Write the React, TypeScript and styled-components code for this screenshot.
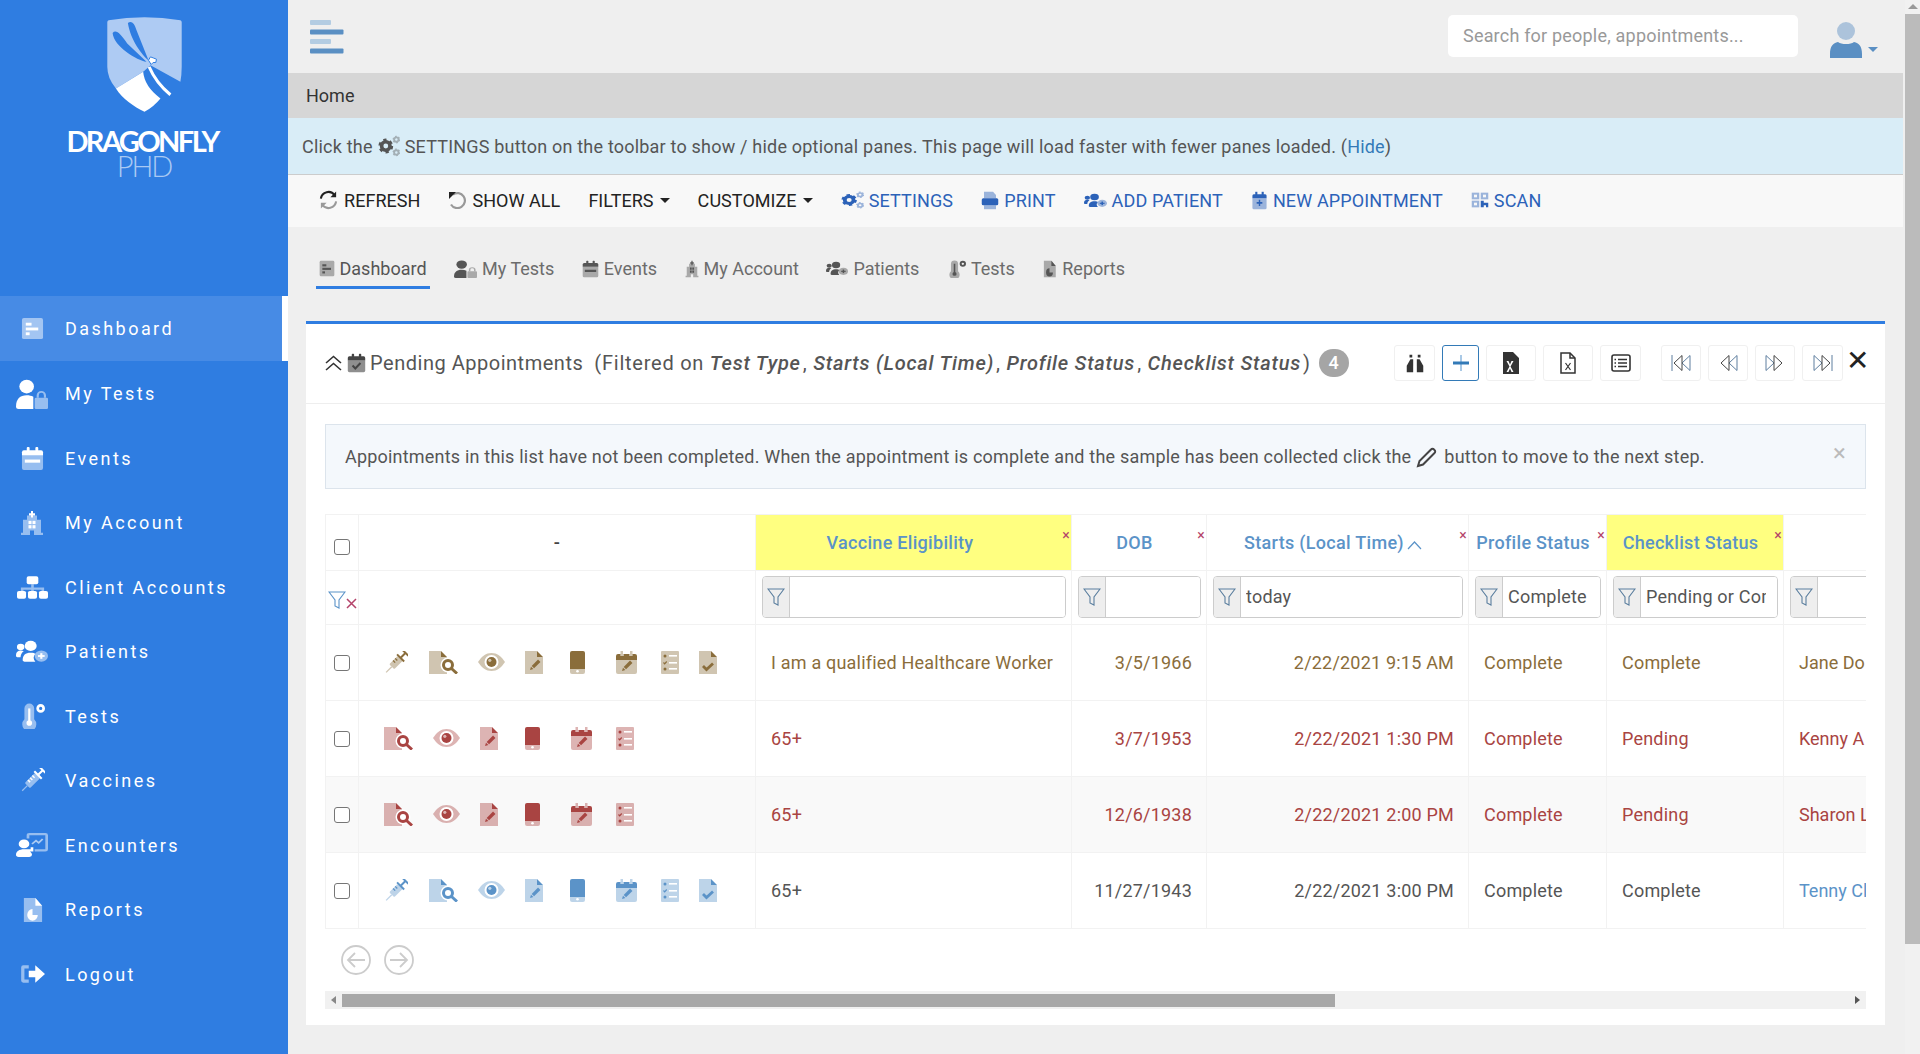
import React from 'react';
import styled, { createGlobalStyle } from 'styled-components';

const GlobalStyle = createGlobalStyle`
  html, body {
    margin: 0;
    height: 100%;
    overflow: hidden;
    background: #efefef;
    font-family: Roboto, "Liberation Sans", sans-serif;
    font-size: 18px;
    color: #555;
  }
  * {
    box-sizing: border-box;
  }
`;

type IconDef = { s?: React.ReactNode; p?: React.ReactNode };

const gear = (cx: number, cy: number, r: number) => (
  <g>
    <circle cx={cx} cy={cy} r={r} fill="none" stroke="currentColor" strokeWidth={r * 0.85} />
    <circle
      cx={cx}
      cy={cy}
      r={r * 1.45}
      fill="none"
      stroke="currentColor"
      strokeWidth={r * 0.6}
      strokeDasharray={`${r * 0.75} ${r * 0.77}`}
    />
  </g>
);

const ICONS: Record<string, IconDef> = {
  dashboard: {
    s: <rect x="1" y="1" width="22" height="22" rx="2" />,
    p: (
      <>
        <rect x="5" y="6" width="6" height="3" />
        <rect x="5" y="11" width="13" height="3" />
        <rect x="5" y="16" width="4" height="3" />
      </>
    ),
  },
  userLock: {
    s: (
      <>
        <rect x="14" y="15" width="10" height="9" rx="1" />
        <path d="M15.500 15v-2a3.500 3.500 0 0 1 7 0v2h-1.600v-2a1.900 1.900 0 0 0-3.800 0v2z" />
      </>
    ),
    p: (
      <>
        <circle cx="8" cy="6" r="5.500" />
        <path d="M0 22c0-6 3-9 8-9 2 0 3.600.4 5 1.200V24H2a2 2 0 0 1-2-2z" />
      </>
    ),
  },
  calendar: {
    s: <path d="M1 9h22v12a2 2 0 0 1-2 2H3a2 2 0 0 1-2-2z" />,
    p: (
      <>
        <path d="M1 6a2 2 0 0 1 2-2h18a2 2 0 0 1 2 2v3H1z" />
        <rect x="6" y="1" width="3" height="4" rx="1" />
        <rect x="15" y="1" width="3" height="4" rx="1" />
        <rect x="4" y="13" width="16" height="3" />
      </>
    ),
  },
  calendarCheck: {
    s: <path d="M1 9h22v12a2 2 0 0 1-2 2H3a2 2 0 0 1-2-2z" />,
    p: (
      <>
        <path d="M1 6a2 2 0 0 1 2-2h18a2 2 0 0 1 2 2v3H1z" />
        <rect x="6" y="1" width="3" height="4" rx="1" />
        <rect x="15" y="1" width="3" height="4" rx="1" />
        <path d="M7 15l3.500 3.500L17 12" fill="none" stroke="currentColor" strokeWidth="2.600" />
      </>
    ),
  },
  hospital: {
    s: <path d="M3 9h4V5h10v4h4v12h2v2h-9v-4h-4v4H1v-2h2z" />,
    p: (
      <>
        <path d="M11 1h2v2h2v2h-2v2h-2V5H9V3h2z" />
        <rect x="8.500" y="10" width="3" height="3" />
        <rect x="12.500" y="10" width="3" height="3" />
        <rect x="8.500" y="14" width="3" height="3" />
        <rect x="12.500" y="14" width="3" height="3" />
      </>
    ),
  },
  sitemap: {
    s: <path d="M11 9h2v3h8v4h-2v-2h-6v2h-2v-2H5v2H3v-4h8z" />,
    p: (
      <>
        <rect x="7.500" y="2" width="9" height="7" rx="1.500" />
        <rect x="0" y="15" width="7" height="7" rx="1.500" />
        <rect x="8.500" y="15" width="7" height="7" rx="1.500" />
        <rect x="17" y="15" width="7" height="7" rx="1.500" />
      </>
    ),
  },
  usersMedical: {
    s: <circle cx="19" cy="16" r="5" />,
    p: (
      <>
        <circle cx="11" cy="7" r="4.500" />
        <path d="M5 20c0-5 2-7 6-7 2 0 3 .5 3.500 1a6 6 0 0 0 0 7H6.500A1.500 1.500 0 0 1 5 20z" />
        <circle cx="3.500" cy="8" r="2.800" />
        <path d="M0 15c0-2.500 1.500-4 3.500-4 1 0 1.800.3 2.300.8C4.300 13 3.600 14.600 3.400 17H1a1 1 0 0 1-1-1z" />
        <rect x="18.200" y="13.500" width="1.600" height="5" />
        <rect x="16.500" y="15.200" width="5" height="1.600" />
      </>
    ),
  },
  thermometer: {
    s: <path d="M5 5a4.500 4.500 0 0 1 9 0v10a6.500 6.500 0 1 1-9 0z" />,
    p: (
      <>
        <rect x="8.500" y="5" width="2" height="12" />
        <circle cx="9.500" cy="18.500" r="2.600" />
        <path
          fillRule="evenodd"
          d="M20 1a4 4 0 1 1 0 8 4 4 0 0 1 0-8zm0 2.500a1.500 1.500 0 1 0 0 3 1.500 1.500 0 0 0 0-3z"
        />
      </>
    ),
  },
  syringe: {
    s: (
      <g transform="rotate(45 12 12)">
        <rect x="8.500" y="5" width="7" height="14" rx="1" />
        <rect x="11.400" y="19" width="1.200" height="7" />
      </g>
    ),
    p: (
      <g transform="rotate(45 12 12)">
        <rect x="7" y="3.500" width="10" height="2" />
        <rect x="11" y="-2" width="2" height="6" />
        <rect x="8" y="-3" width="8" height="2" />
        <rect x="8.500" y="8" width="3" height="1.400" />
        <rect x="8.500" y="11" width="3" height="1.400" />
        <rect x="8.500" y="14" width="3" height="1.400" />
      </g>
    ),
  },
  chalkboard: {
    s: (
      <path
        fillRule="evenodd"
        d="M8 3a2 2 0 0 1 2-2h12a2 2 0 0 1 2 2v13a2 2 0 0 1-2 2h-8v-2h8V3H10v3H8z"
      />
    ),
    p: (
      <>
        <circle cx="6" cy="11" r="4" />
        <path d="M0 21c0-3 2.500-5 6-5h5v-2h2v4H10.500c.800.800 1.500 1.800 1.500 3a2 2 0 0 1-2 2H2a2 2 0 0 1-2-2z" />
        <path d="M12 11l3-3 2 2 3-3.500" fill="none" stroke="currentColor" strokeWidth="1.400" opacity="0.6" />
      </>
    ),
  },
  filePie: {
    s: <path d="M3 1h12l7 7v15H3z" />,
    p: (
      <>
        <path d="M15 1l7 7h-7z" />
        <path d="M12 11a5.500 5.500 0 1 0 5.500 5.500H12z" />
      </>
    ),
  },
  signOut: {
    s: <path d="M9 4H4a2 2 0 0 0-2 2v12a2 2 0 0 0 2 2h5v-3H5V7h4z" />,
    p: <path d="M9 9h6V4l9 8-9 8v-5H9z" />,
  },
  gears: {
    s: (
      <>
        {gear(20, 5, 2.400)}
        {gear(20, 19, 2.400)}
      </>
    ),
    p: gear(8.500, 12, 4.600),
  },
  print: {
    s: (
      <>
        <path d="M4 1h12l4 4v4H4z" />
        <rect x="4" y="18" width="16" height="5" />
      </>
    ),
    p: <rect x="1" y="9" width="22" height="9" rx="2" />,
  },
  calendarPlus: {
    s: <path d="M2 9h20v12a2 2 0 0 1-2 2H4a2 2 0 0 1-2-2z" />,
    p: (
      <>
        <path d="M2 6a2 2 0 0 1 2-2h16a2 2 0 0 1 2 2v3H2z" />
        <rect x="6" y="1" width="3" height="4" />
        <rect x="15" y="1" width="3" height="4" />
        <path d="M11 11h2v3h3v2h-3v3h-2v-3H8v-2h3z" />
      </>
    ),
  },
  qr: {
    s: (
      <>
        <rect x="1" y="1" width="10" height="10" />
        <rect x="13" y="1" width="10" height="10" />
        <rect x="1" y="13" width="10" height="10" />
      </>
    ),
    p: (
      <>
        <rect x="4" y="4" width="4" height="4" fill="#f8f8f8" />
        <rect x="16" y="4" width="4" height="4" fill="#f8f8f8" />
        <rect x="4" y="16" width="4" height="4" fill="#f8f8f8" />
        <path d="M13 13h4v3h6v7h-3v-3h-3v3h-4z" />
      </>
    ),
  },
  binoculars: {
    p: (
      <>
        <path d="M7 8h3v14H3v-7z" />
        <path d="M14 8h3l4 7v7h-7z" />
        <rect x="6" y="3" width="3" height="3" />
        <rect x="15" y="3" width="3" height="3" />
      </>
    ),
  },
  fileX: {
    p: (
      <path
        fillRule="evenodd"
        d="M4 1h10l6 6v16H4zm3.500 9l3 5.500-3 5.500h2l1.500-3.500 1.500 3.500h2l-3-5.500 3-5.500h-2L11 13.500 9.500 10z"
      />
    ),
  },
};

const Duo = ({ name, w, h, sec = 0.45 }: { name: string; w: number; h?: number; sec?: number }) => (
  <svg width={w} height={h ?? w} viewBox="0 0 24 24" fill="currentColor" preserveAspectRatio="none">
    <g opacity={sec}>{ICONS[name].s}</g>
    {ICONS[name].p}
  </svg>
);

const pen = (x: number, y: number) => (
  <g transform={`translate(${x} ${y}) rotate(45)`}>
    <rect x="-1.700" y="-6" width="3.400" height="9" />
    <path d="M-1.700 4L0 7l1.700-3z" />
  </g>
);

const ROW_ICONS: Record<string, { w: number; gap: number; body: React.ReactNode }> = {
  syringe: {
    w: 24,
    gap: 21,
    body: (
      <g transform="translate(0 -.5)">
        <g opacity={0.4}>
          <g transform="rotate(45 12 12)">
            <rect x="8.500" y="6" width="7" height="12" rx="1" />
            <rect x="11.400" y="18" width="1.200" height="8" />
          </g>
        </g>
        <g transform="rotate(45 12 12)">
          <rect x="7" y="4.500" width="10" height="2" />
          <rect x="11" y="-1" width="2" height="6" />
          <rect x="8" y="-2.500" width="8" height="2" />
          <rect x="8.500" y="9" width="3" height="1.300" />
          <rect x="8.500" y="12" width="3" height="1.300" />
        </g>
      </g>
    ),
  },
  fileSearch: {
    w: 29,
    gap: 20,
    body: (
      <>
        <path d="M0 0h12v6h6v17H0z" opacity={0.4} />
        <path d="M12 0l6 6h-6z" />
        <circle cx="19" cy="14" r="7.500" fill="#fff" />
        <circle cx="19" cy="14" r="4.500" fill="#fff" stroke="currentColor" strokeWidth="3" />
        <path d="M22.500 17.500l5.500 5" stroke="currentColor" strokeWidth="3" />
      </>
    ),
  },
  eye: {
    w: 27,
    gap: 20,
    body: (
      <>
        <path d="M0 11C4 5 8 2 13.500 2S23 5 27 11c-4 6-8 9-13.500 9S4 17 0 11z" opacity={0.4} />
        <circle cx="13.500" cy="11" r="7" fill="#fff" />
        <circle cx="13.500" cy="11" r="5" />
        <circle cx="11.800" cy="9.300" r="1.600" fill="#fff" opacity="0.6" />
      </>
    ),
  },
  filePen: {
    w: 18,
    gap: 27,
    body: (
      <>
        <path d="M0 0h12v6h6v17H0z" opacity={0.4} />
        <path d="M12 0l6 6h-6z" />
        {pen(10, 14)}
      </>
    ),
  },
  phone: {
    w: 15,
    gap: 31,
    body: (
      <>
        <path d="M2 0h11a2 2 0 0 1 2 2v16H0V2a2 2 0 0 1 2-2z" />
        <path d="M0 17h15v4a2 2 0 0 1-2 2H2a2 2 0 0 1-2-2z" opacity={0.4} />
        <circle cx="7.500" cy="20.300" r="1.300" fill="#fff" />
      </>
    ),
  },
  calPen: {
    w: 21,
    gap: 24,
    body: (
      <>
        <path d="M0 7h21v14a2 2 0 0 1-2 2H2a2 2 0 0 1-2-2z" opacity={0.4} />
        <rect x="4.500" y="0" width="2.500" height="5" opacity={0.4} />
        <rect x="14" y="0" width="2.500" height="5" opacity={0.4} />
        <path d="M2 3h2.500v2h3V3h6v2h3V3H19a2 2 0 0 1 2 2v4H0V5a2 2 0 0 1 2-2z" />
        {pen(11, 15)}
      </>
    ),
  },
  checklist: {
    w: 18,
    gap: 20,
    body: (
      <>
        <rect x="0" y="0" width="18" height="23" rx="1" opacity={0.4} />
        <circle cx="4" cy="5" r="1.500" />
        <path d="M2.500 11.500l1.200 1.300 2-2.300" fill="none" stroke="currentColor" strokeWidth="1.200" />
        <circle cx="4" cy="18" r="1.500" />
        <rect x="8" y="4" width="8" height="1.600" fill="#fff" />
        <rect x="8" y="11" width="8" height="1.600" fill="#fff" />
        <rect x="8" y="17" width="8" height="1.600" fill="#fff" />
      </>
    ),
  },
  fileCheck: {
    w: 18,
    gap: 0,
    body: (
      <>
        <path d="M0 0h12v6h6v17H0z" opacity={0.4} />
        <path d="M12 0l6 6h-6z" />
        <path d="M4 15l3.500 3.500L14 12.500" fill="none" stroke="currentColor" strokeWidth="2.800" />
      </>
    ),
  },
};

const Shell = styled.div`
  display: flex;
  height: 1054px;
  overflow: hidden;
`;

const Sidebar = styled.aside`
  flex: 0 0 288px;
  background: #2f7de1;
  display: flex;
  flex-direction: column;
`;

const LogoBox = styled.div`
  height: 296px;
  display: flex;
  flex-direction: column;
  align-items: center;
  padding-top: 17px;
`;

const LogoName = styled.div`
  margin: 15px 0 0 -4px;
  font-family: Lato, Roboto, sans-serif;
  font-size: 29px;
  line-height: 22px;
  font-weight: 700;
  letter-spacing: -2.600px;
  color: #fff;
`;

const LogoPhd = styled.div`
  margin-top: 3px;
  font-family: Lato, Roboto, sans-serif;
  font-size: 29px;
  line-height: 22px;
  font-weight: 300;
  letter-spacing: -2px;
  color: #a9c9f3;
`;

const NavItem = styled.div<{ $active?: boolean }>`
  height: 64.500px;
  display: flex;
  align-items: center;
  gap: 17px;
  padding: ${(p) => (p.$active ? 0 : 2)}px 0 0 16px;
  color: #fff;
  letter-spacing: 2.450px;
  font-size: 18px;
  background: ${(p) => (p.$active ? '#478be5' : 'transparent')};
  border-right: 6px solid ${(p) => (p.$active ? '#fff' : 'transparent')};
`;

const NavIconBox = styled.span`
  width: 32px;
  display: flex;
  justify-content: center;
`;

const Main = styled.main`
  flex: 1;
  min-width: 0;
  display: flex;
  flex-direction: column;
`;

const TopBar = styled.header`
  height: 73px;
  display: flex;
  align-items: center;
  padding: 0 27px 0 22px;
`;

const Spacer = styled.div`
  flex: 1;
`;

const SearchInput = styled.input`
  width: 350px;
  height: 42px;
  margin-top: -2px;
  border: 0;
  border-radius: 5px;
  background: #fff;
  padding: 0 15px;
  font: 18px Roboto, sans-serif;
  letter-spacing: 0.2px;
  outline: none;
  &::placeholder {
    color: #999;
    opacity: 1;
  }
`;

const AvatarBox = styled.div`
  display: flex;
  align-items: flex-end;
  margin: 6px 0 0 32px;
  color: #5a8fc3;
`;

const Caret = styled.span`
  display: inline-block;
  border-top: 5px solid currentColor;
  border-left: 5px solid transparent;
  border-right: 5px solid transparent;
`;

const AvatarCaret = styled(Caret)`
  margin: 0 0 6px 6px;
`;

const Breadcrumb = styled.div`
  height: 45px;
  margin-right: 2px;
  background: #d6d6d6;
  padding-left: 18px;
  display: flex;
  align-items: center;
  color: #333;
`;

const Alert = styled.div`
  height: 56px;
  margin-right: 2px;
  background: #d9edf7;
  padding-left: 14px;
  display: flex;
  align-items: center;
  gap: 5px;
  letter-spacing: 0.2px;
  white-space: pre;
`;

const HideLink = styled.a`
  color: #337ab7;
`;

const Toolbar = styled.nav`
  height: 53px;
  margin-right: 2px;
  border-top: 1px solid #ccc;
  background: #f8f8f8;
  padding: 0 0 2px 31px;
  display: flex;
  align-items: center;
  gap: 28px;
  letter-spacing: 0.05px;
`;

const ToolButton = styled.div<{ $blue?: boolean }>`
  display: flex;
  align-items: center;
  gap: ${(p) => (p.$blue ? 5 : 6)}px;
  color: ${(p) => (p.$blue ? '#2c62b8' : '#222')};
  letter-spacing: ${(p) => (p.$blue ? 0.14 : 0.05)}px;
`;

const Tabs = styled.div`
  height: 94px;
  display: flex;
  align-items: flex-start;
  gap: 21.500px;
  padding: 26px 0 0 27.500px;
`;

const Tab = styled.div<{ $active?: boolean }>`
  height: 36px;
  display: flex;
  align-items: center;
  gap: 5px;
  padding: 0 3px 2px;
  color: ${(p) => (p.$active ? '#555' : '#6c6c6c')};
  border-bottom: 3px solid ${(p) => (p.$active ? '#2f7de1' : 'transparent')};
`;

const TabIcon = styled.span`
  color: #555;
  display: flex;
`;

const Card = styled.section`
  margin: 0 20px 0 18px;
  height: 704px;
  background: #fff;
  border-top: 3px solid #2f7de1;
  padding: 0 19px;
`;

const CardHead = styled.div`
  height: 80px;
  margin: 0 -19px;
  padding: 0 19px 2px;
  display: flex;
  align-items: center;
  border-bottom: 1px solid #eee;
`;

const TitleIcons = styled.span`
  display: flex;
  align-items: center;
  gap: 5px;
  margin-right: 4px;
  color: #444;
`;

const Title = styled.span`
  font-size: 20px;
  letter-spacing: 0.52px;
  color: #555;
`;

const Filtered = styled(Title)`
  margin-left: 11px;
  letter-spacing: 0.76px;
  & > em {
    font-weight: 500;
    padding-right: 2px;
  }
`;

const Badge = styled.span`
  margin-left: 8px;
  width: 30px;
  height: 28px;
  border-radius: 14px;
  background: #a5a5a5;
  color: #fff;
  display: flex;
  align-items: center;
  justify-content: center;
  font-weight: 500;
`;

const CardTools = styled.div`
  margin-left: auto;
  display: flex;
  align-items: center;
  gap: 7px;
`;

const ToolGap = styled.span`
  width: 6px;
`;

const IconBtn = styled.button<{ $w: number; $on?: boolean }>`
  width: ${(p) => p.$w}px;
  height: 36px;
  padding: 0;
  background: #fff;
  border: 1px solid ${(p) => (p.$on ? '#337ab7' : '#f0f0f0')};
  border-radius: 3px;
  display: flex;
  align-items: center;
  justify-content: center;
  color: #333;
`;

const CloseX = styled.span`
  margin: -4px 0 0 -2px;
  width: 18px;
  font-size: 28px;
  line-height: 1;
  font-weight: 300;
  color: #222;
  display: flex;
  justify-content: center;
`;

const InfoBox = styled.div`
  position: relative;
  margin-top: 20px;
  height: 65px;
  background: #f4f8fc;
  border: 1px solid #dce4ec;
  padding-left: 19px;
  display: flex;
  align-items: center;
  letter-spacing: 0.2px;
  white-space: pre;
`;

const InfoPen = styled.svg`
  margin: 0 6px 0 5px;
  color: #444;
`;

const InfoClose = styled.span`
  position: absolute;
  right: 19px;
  top: 16px;
  font-size: 24px;
  line-height: 1;
  color: #bbb;
`;

const TableClip = styled.div`
  margin-top: 25px;
  overflow: hidden;
`;

const Table = styled.table`
  width: 1657px;
  table-layout: fixed;
  border-collapse: collapse;
`;

const HeadCell = styled.th<{ $yellow?: boolean; $pr?: number }>`
  position: relative;
  height: 56px;
  padding: 0 ${(p) => p.$pr ?? 9}px 0 0;
  border: 1px solid #f2f2f2;
  background: ${(p) => (p.$yellow ? '#ffff80' : '#fff')};
  color: #5b93c8;
  font-size: 18px;
  font-weight: 500;
  letter-spacing: 0.3px;
  text-align: center;
  white-space: nowrap;
`;

const ActionsHead = styled(HeadCell)`
  color: #444;
`;

const CheckHead = styled(HeadCell)`
  padding-top: 9px;
`;

const SortUp = styled.svg`
  margin-left: 3px;
  vertical-align: -1px;
`;

const RemoveCol = styled.span`
  position: absolute;
  right: 1px;
  top: 13px;
  color: #b4436a;
  font-size: 14px;
  font-weight: 400;
  line-height: 1;
`;

const FilterCell = styled.td`
  height: 54px;
  padding: 0 5px 2px 6px;
  border: 1px solid #f2f2f2;
`;

const ClearCell = styled(FilterCell)`
  padding: 4px 0 0;
`;

const Check = styled.input.attrs({ type: 'checkbox' })`
  appearance: none;
  display: block;
  margin: 0 auto;
  width: 16px;
  height: 16px;
  background: #fff;
  border: 1px solid #767676;
  border-radius: 3px;
`;

const FilterGroup = styled.div`
  display: flex;
  height: 42px;
  border: 1px solid #ccc;
  border-radius: 4px;
  overflow: hidden;
`;

const FilterAddon = styled.span`
  flex: 0 0 27px;
  background: #eee;
  border-right: 1px solid #ccc;
  display: flex;
  align-items: center;
  justify-content: center;
`;

const FilterInput = styled.input`
  flex: 1;
  min-width: 0;
  border: 0;
  outline: none;
  padding: 0 11px 0 5px;
  font: 18px Roboto, sans-serif;
  letter-spacing: 0.2px;
  color: #555;
`;

const ClearFilter = styled.div`
  display: flex;
  align-items: flex-end;
  justify-content: center;
  & > svg {
    flex: none;
  }
`;

const Row = styled.tr<{ $tone: string; $striped?: boolean }>`
  color: ${(p) => p.$tone};
  background: ${(p) => (p.$striped ? '#f9f9f9' : '#fff')};
`;

const Cell = styled.td<{ $right?: boolean }>`
  height: 76px;
  padding: 0 14px 0 15px;
  border: 1px solid #f2f2f2;
  letter-spacing: 0.2px;
  white-space: nowrap;
  text-align: ${(p) => (p.$right ? 'right' : 'left')};
`;

const CheckCell = styled(Cell)`
  padding: 0;
`;

const NameCell = styled(Cell)<{ $link?: boolean }>`
  letter-spacing: 0;
  color: ${(p) => (p.$link ? '#5b93c8' : 'inherit')};
`;

const ActionsCell = styled.td<{ $color: string }>`
  padding: 0 0 0 25px;
  border: 1px solid #f2f2f2;
  color: ${(p) => p.$color};
`;

const ActionList = styled.div`
  display: flex;
  align-items: center;
`;

const ActionIcon = styled.svg<{ $gap: number }>`
  flex: none;
  margin-right: ${(p) => p.$gap}px;
  fill: currentColor;
`;

const Pager = styled.div`
  height: 62px;
  padding: 16px 0 0 16px;
  display: flex;
  gap: 13px;
`;

const ScrollX = styled.div`
  height: 18px;
  background: #f1f1f1;
  display: flex;
  align-items: center;
  justify-content: space-between;
  padding: 0 6px;
`;

const ScrollThumb = styled.div`
  width: 993px;
  height: 13px;
  margin: 0 auto 0 6px;
  background: #a8a8a8;
`;

const ArrowLeft = styled.span`
  border-right: 5px solid #888;
  border-top: 4px solid transparent;
  border-bottom: 4px solid transparent;
`;

const ArrowRight = styled.span`
  border-left: 5px solid #555;
  border-top: 4px solid transparent;
  border-bottom: 4px solid transparent;
`;

const PageRail = styled.div`
  flex: 0 0 15px;
  background: #f1f1f1;
  display: flex;
  flex-direction: column;
  align-items: center;
  padding-top: 4px;
`;

const RailUp = styled.span`
  border-bottom: 5px solid #999;
  border-left: 5px solid transparent;
  border-right: 5px solid transparent;
`;

const RailThumb = styled.div`
  width: 100%;
  height: 930px;
  margin-top: 5px;
  background: #bbb;
`;

const LogoMark = () => (
  <svg width="75" height="98" viewBox="0 0 224 295">
    <path
      d="M4 10Q112-8 220 10q4 2 4 6V150q0 25-4 45L130 145l-20 18L26 215Q0 185 0 150V16q0-4 4-6z"
      fill="#aecbf3"
    />
    <path d="M26 215l82-50q4 45 52 80-20 25-48 40c-32-15-67-40-86-70z" fill="#fff" />
    <path d="M62 18c10-8 20 0 26 22l36 90C105 115 70 70 62 18z" fill="#2f7de1" />
    <path d="M16 48c10-12 24 2 44 32l58 55C90 130 20 90 16 48z" fill="#2f7de1" />
    <path d="M124 130l6-10 8 3 10 4-2 10-8 0-6 6z" fill="#fff" stroke="#2f7de1" strokeWidth="3" />
    <path d="M126 150c15 35 35 60 64 84" fill="none" stroke="#fff" strokeWidth="9" />
  </svg>
);

const Hamburger = () => (
  <svg width="34" height="34" viewBox="0 0 34 34">
    <rect x="0" y="0" width="21" height="5" rx="1" fill="#b3cce2" />
    <rect x="0" y="9.500" width="33.500" height="5" rx="1" fill="#5a8fc3" />
    <rect x="0" y="19" width="21" height="5" rx="1" fill="#b3cce2" />
    <rect x="0" y="28.500" width="33.500" height="5" rx="1" fill="#5a8fc3" />
  </svg>
);

const Avatar = () => (
  <svg width="32" height="36" viewBox="0 0 32 36" fill="currentColor">
    <circle cx="16" cy="9" r="9" opacity="0.45" />
    <path d="M0 32c0-8 3-11 8-12 2 1.500 4.500 2 8 2s6-.5 8-2c5 1 8 4 8 12v4H0z" />
  </svg>
);

const RefreshIcon = () => (
  <svg width="19" height="20" viewBox="0 0 20 20" fill="none" strokeWidth="2.200">
    <path d="M2 8.500A8 8 0 0 1 16.500 5" stroke="#222" />
    <path d="M18 1v6h-6z" fill="#222" />
    <path d="M18 11.500A8 8 0 0 1 3.500 15" stroke="#999" />
    <path d="M2 19v-6h6z" fill="#999" />
  </svg>
);

const UndoIcon = () => (
  <svg width="18" height="18" viewBox="0 0 18 18" fill="none" strokeWidth="2.200">
    <path d="M5 3.500A7.500 7.500 0 1 1 3 13.500" stroke="#999" />
    <path d="M1 1h7l-7 7z" fill="#222" />
  </svg>
);

const Funnel = ({ color = '#5b7f9f', size = 18 }: { color?: string; size?: number }) => (
  <svg width={size} height={size} viewBox="0 0 18 18" fill="none" stroke={color} strokeWidth="1.100">
    <path d="M1 1h16l-6 8v8l-4-2V9z" />
  </svg>
);

const ListIcon = () => (
  <svg width="20" height="20" viewBox="0 0 20 20" fill="none" stroke="#333" strokeWidth="1.600">
    <rect x="1" y="2" width="18" height="16" rx="2" />
    <path d="M7 6.500h9M7 10h9M7 13.500h9" />
    <path d="M3.500 6.500h1.500M3.500 10h1.500M3.500 13.500h1.500" />
  </svg>
);

const Plus = () => (
  <svg width="16" height="16" viewBox="0 0 16 16">
    <rect x="7" y="0" width="2" height="16" fill="#a9c9e6" />
    <rect x="0" y="6.500" width="16" height="3" fill="#337ab7" />
  </svg>
);

const OutlineFile = () => (
  <svg width="18" height="22" viewBox="0 0 18 22" fill="none" stroke="#333" strokeWidth="1.500">
    <path d="M2 1h9l5 5v15H2z" />
    <path d="M11 1v5h5" />
    <path d="M6.500 11l5 7M11.500 11l-5 7" strokeWidth="1.200" />
  </svg>
);

const Skip = ({ dir }: { dir: 'first' | 'prev' | 'next' | 'last' }) => {
  const flip = dir === 'first' || dir === 'prev' ? 'scale(-1 1) translate(-22 0)' : undefined;
  return (
    <svg width="22" height="18" viewBox="0 0 22 18" fill="none" stroke="#444" strokeWidth="1">
      <g transform={flip}>
        <path d="M2 1.500L10 9l-8 7.500z" stroke="#5f7f9f" />
        <path d="M10 1.500L18 9l-8 7.500z" />
        {(dir === 'first' || dir === 'last') && <path d="M20 1v16" stroke="#5f7f9f" />}
      </g>
    </svg>
  );
};

const CircleArrow = ({ back }: { back?: boolean }) => (
  <svg width="30" height="30" viewBox="0 0 30 30" fill="none" stroke="#ccc" strokeWidth="1.800">
    <circle cx="15" cy="15" r="14" />
    <path d={back ? 'M24 15H7M14 8l-7 7 7 7' : 'M6 15h17M16 8l7 7-7 7'} />
  </svg>
);

const NAV = [
  ['dashboard', 'Dashboard', 23, 23],
  ['userLock', 'My Tests', 32, 30],
  ['calendar', 'Events', 23, 25],
  ['hospital', 'My Account', 24, 26],
  ['sitemap', 'Client Accounts', 31, 27],
  ['usersMedical', 'Patients', 32, 27],
  ['thermometer', 'Tests', 26, 26],
  ['syringe', 'Vaccines', 25, 25],
  ['chalkboard', 'Encounters', 32, 26],
  ['filePie', 'Reports', 23, 26],
  ['signOut', 'Logout', 26, 26],
] as const;

const TABS = [
  ['dashboard', 'Dashboard', 16, 17],
  ['userLock', 'My Tests', 23, 18],
  ['calendar', 'Events', 17, 18],
  ['hospital', 'My Account', 14, 18],
  ['usersMedical', 'Patients', 22, 17],
  ['thermometer', 'Tests', 19, 18],
  ['filePie', 'Reports', 15, 18],
] as const;

const BLUE_TOOLS = [
  ['gears', 'SETTINGS', 23, 18],
  ['print', 'PRINT', 18, 19],
  ['usersMedical', 'ADD PATIENT', 23, 17],
  ['calendarPlus', 'NEW APPOINTMENT', 17, 19],
  ['qr', 'SCAN', 18, 16],
] as const;

const COLUMNS = [33, 397, 316, 135, 262, 138, 177, 200];

const ALL_ICONS = Object.keys(ROW_ICONS);
const NO_VACCINE = ALL_ICONS.filter((n) => n !== 'syringe' && n !== 'fileCheck');

const ROWS = [
  {
    tone: '#8a6d3b',
    icons: ALL_ICONS,
    iconColor: '#8a6d3b',
    eligibility: 'I am a qualified Healthcare Worker',
    dob: '3/5/1966',
    starts: '2/22/2021 9:15 AM',
    checklist: 'Complete',
    name: 'Jane Do',
  },
  {
    tone: '#a94442',
    icons: NO_VACCINE,
    iconColor: '#a94442',
    eligibility: '65+',
    dob: '3/7/1953',
    starts: '2/22/2021 1:30 PM',
    checklist: 'Pending',
    name: 'Kenny A',
  },
  {
    tone: '#a94442',
    icons: NO_VACCINE,
    iconColor: '#a94442',
    striped: true,
    eligibility: '65+',
    dob: '12/6/1938',
    starts: '2/22/2021 2:00 PM',
    checklist: 'Pending',
    name: 'Sharon L',
  },
  {
    tone: '#555555',
    icons: ALL_ICONS,
    iconColor: '#5b93c8',
    link: true,
    eligibility: '65+',
    dob: '11/27/1943',
    starts: '2/22/2021 3:00 PM',
    checklist: 'Complete',
    name: 'Tenny Cl',
  },
];

const FILTERS = ['', '', 'today', 'Complete', 'Pending or Complete', ''];

const App = () => {
  return (
    <Shell>
      <GlobalStyle />
      <Sidebar>
        <LogoBox>
          <LogoMark />
          <LogoName>DRAGONFLY</LogoName>
          <LogoPhd>PHD</LogoPhd>
        </LogoBox>
        {NAV.map(([icon, label, w, h], idx) => (
          <NavItem key={label} $active={idx === 0}>
            <NavIconBox>
              <Duo name={icon} w={w} h={h} sec={0.5} />
            </NavIconBox>
            {label}
          </NavItem>
        ))}
      </Sidebar>

      <Main>
        <TopBar>
          <Hamburger />
          <Spacer />
          <SearchInput placeholder="Search for people, appointments..." />
          <AvatarBox>
            <Avatar />
            <AvatarCaret />
          </AvatarBox>
        </TopBar>
        <Breadcrumb>Home</Breadcrumb>
        <Alert>
          Click the
          <Duo name="gears" w={22} sec={0.4} />
          <span>
            SETTINGS button on the toolbar to show / hide optional panes. This page will load faster with
            fewer panes loaded. (<HideLink>Hide</HideLink>)
          </span>
        </Alert>
        <Toolbar>
          <ToolButton>
            <RefreshIcon />
            REFRESH
          </ToolButton>
          <ToolButton>
            <UndoIcon />
            SHOW ALL
          </ToolButton>
          <ToolButton>
            FILTERS
            <Caret />
          </ToolButton>
          <ToolButton>
            CUSTOMIZE
            <Caret />
          </ToolButton>
          {BLUE_TOOLS.map(([icon, label, w, h]) => (
            <ToolButton key={label} $blue>
              <Duo name={icon} w={w} h={h} />
              {label}
            </ToolButton>
          ))}
        </Toolbar>
        <Tabs>
          {TABS.map(([icon, label, w, h], idx) => (
            <Tab key={label} $active={idx === 0}>
              <TabIcon>
                <Duo name={icon} w={w} h={h} />
              </TabIcon>
              {label}
            </Tab>
          ))}
        </Tabs>

        <Card>
          <CardHead>
            <TitleIcons>
              <svg width="17" height="16" viewBox="0 0 17 16" fill="none" stroke="#333" strokeWidth="1.600">
                <path d="M1 8l7.500-6.500L16 8M1 15l7.500-6.500L16 15" />
              </svg>
              <Duo name="calendarCheck" w={19} h={20} sec={0.6} />
            </TitleIcons>
            <Title>Pending Appointments</Title>
            <Filtered>
              (Filtered on <em>Test Type</em>, <em>Starts (Local Time)</em>, <em>Profile Status</em>,{' '}
              <em>Checklist Status</em>)
            </Filtered>
            <Badge>4</Badge>
            <CardTools>
              <IconBtn $w={41}>
                <Duo name="binoculars" w={22} />
              </IconBtn>
              <IconBtn $w={37} $on>
                <Plus />
              </IconBtn>
              <IconBtn $w={50}>
                <Duo name="fileX" w={24} />
              </IconBtn>
              <IconBtn $w={50}>
                <OutlineFile />
              </IconBtn>
              <IconBtn $w={41}>
                <ListIcon />
              </IconBtn>
              <ToolGap />
              <IconBtn $w={40}>
                <Skip dir="first" />
              </IconBtn>
              <IconBtn $w={40}>
                <Skip dir="prev" />
              </IconBtn>
              <IconBtn $w={40}>
                <Skip dir="next" />
              </IconBtn>
              <IconBtn $w={41}>
                <Skip dir="last" />
              </IconBtn>
              <CloseX>✕</CloseX>
            </CardTools>
          </CardHead>

          <InfoBox>
            Appointments in this list have not been completed. When the appointment is complete and the sample
            has been collected click the
            <InfoPen width="22" height="22" viewBox="0 0 22 22" fill="none" stroke="currentColor" strokeWidth="2">
              <path d="M2 20l1.500-5L15 3.500a2 2 0 0 1 3 0l.5.5a2 2 0 0 1 0 3L7 18.500z" />
            </InfoPen>
            button to move to the next step.
            <InfoClose>×</InfoClose>
          </InfoBox>

          <TableClip>
            <Table>
              <colgroup>
                {COLUMNS.map((w, idx) => (
                  <col key={String(idx)} width={w} />
                ))}
              </colgroup>
              <thead>
                <tr>
                  <CheckHead $pr={0}>
                    <Check />
                  </CheckHead>
                  <ActionsHead $pr={0}>-</ActionsHead>
                  <HeadCell $yellow $pr={27}>
                    Vaccine Eligibility
                    <RemoveCol>×</RemoveCol>
                  </HeadCell>
                  <HeadCell>
                    DOB
                    <RemoveCol>×</RemoveCol>
                  </HeadCell>
                  <HeadCell>
                    Starts (Local Time)
                    <SortUp width="15" height="9" viewBox="0 0 15 9" fill="none" stroke="#5b93c8" strokeWidth="1.200">
                      <path d="M1 8l6.500-7L14 8" />
                    </SortUp>
                    <RemoveCol>×</RemoveCol>
                  </HeadCell>
                  <HeadCell>
                    Profile Status
                    <RemoveCol>×</RemoveCol>
                  </HeadCell>
                  <HeadCell $yellow>
                    Checklist Status
                    <RemoveCol>×</RemoveCol>
                  </HeadCell>
                  <HeadCell />
                </tr>
                <tr>
                  <ClearCell>
                    <ClearFilter>
                      <Funnel color="#5b93c8" size={18} />
                      <svg width="11" height="11" viewBox="0 0 11 11" stroke="#b4436a" strokeWidth="1.500">
                        <path d="M1 1l9 9M10 1l-9 9" />
                      </svg>
                    </ClearFilter>
                  </ClearCell>
                  <FilterCell />
                  {FILTERS.map((value, idx) => (
                    <FilterCell key={String(idx)}>
                      <FilterGroup>
                        <FilterAddon>
                          <Funnel />
                        </FilterAddon>
                        <FilterInput readOnly value={value} />
                      </FilterGroup>
                    </FilterCell>
                  ))}
                </tr>
              </thead>
              <tbody>
                {ROWS.map((row) => (
                  <Row key={row.name} $tone={row.tone} $striped={row.striped}>
                    <CheckCell>
                      <Check />
                    </CheckCell>
                    <ActionsCell $color={row.iconColor}>
                      <ActionList>
                        {row.icons.map((name) => (
                          <ActionIcon
                            key={name}
                            $gap={ROW_ICONS[name].gap}
                            width={ROW_ICONS[name].w}
                            height={23}
                            viewBox={`0 0 ${ROW_ICONS[name].w} 23`}
                          >
                            {ROW_ICONS[name].body}
                          </ActionIcon>
                        ))}
                      </ActionList>
                    </ActionsCell>
                    <Cell>{row.eligibility}</Cell>
                    <Cell $right>{row.dob}</Cell>
                    <Cell $right>{row.starts}</Cell>
                    <Cell>Complete</Cell>
                    <Cell>{row.checklist}</Cell>
                    <NameCell $link={row.link}>{row.name}</NameCell>
                  </Row>
                ))}
              </tbody>
            </Table>
          </TableClip>

          <Pager>
            <CircleArrow back />
            <CircleArrow />
          </Pager>
          <ScrollX>
            <ArrowLeft />
            <ScrollThumb />
            <ArrowRight />
          </ScrollX>
        </Card>
      </Main>

      <PageRail>
        <RailUp />
        <RailThumb />
      </PageRail>
    </Shell>
  );
};

export default App;
